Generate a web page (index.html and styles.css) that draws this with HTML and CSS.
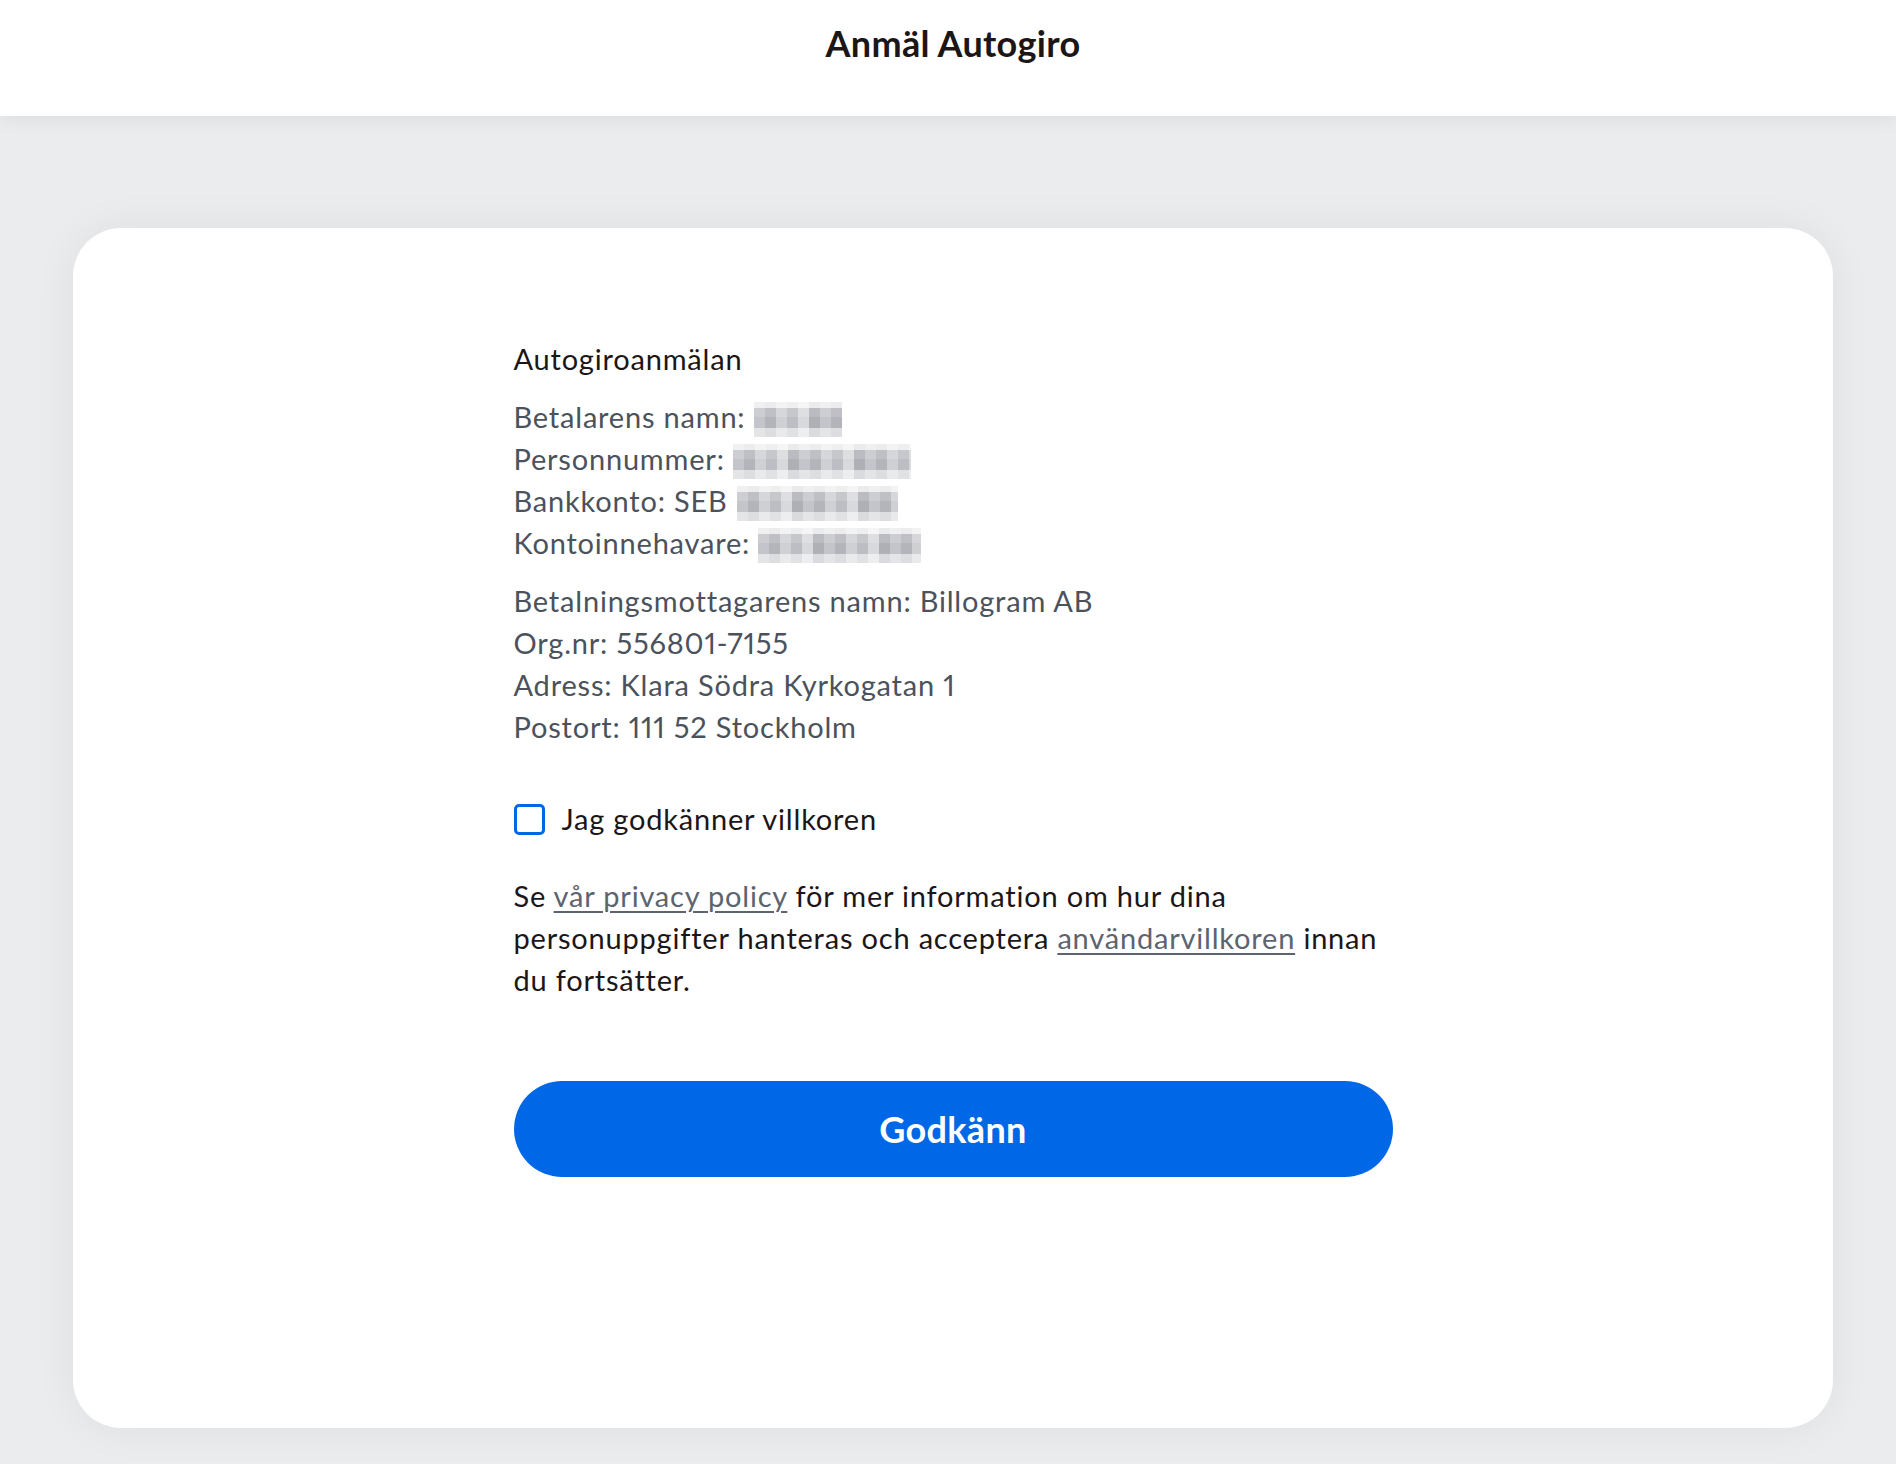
FILE: index.html
```html
<!DOCTYPE html>
<html lang="sv">
<head>
  <meta charset="UTF-8">
  <meta name="viewport" content="width=device-width, initial-scale=1.0">
  <title>Anmäl Autogiro</title>
  <link rel="stylesheet" href="styles.css">
</head>
<body>

<header class="topbar">
  <h1 class="topbar-title">Anmäl Autogiro</h1>
</header>

<main class="page">
  <section class="card">
    <div class="mandate">
      <h2 class="mandate-title">Autogiroanmälan</h2>

      <div class="info-block">
        <p class="info-line">Betalarens namn: <span class="blur blur-name" aria-hidden="true"></span></p>
        <p class="info-line">Personnummer: <span class="blur blur-ssn" aria-hidden="true"></span></p>
        <p class="info-line">Bankkonto: SEB .<span class="blur blur-account" aria-hidden="true"></span></p>
        <p class="info-line">Kontoinnehavare: <span class="blur blur-holder" aria-hidden="true"></span></p>
      </div>

      <div class="info-block">
        <p class="info-line">Betalningsmottagarens namn: Billogram AB</p>
        <p class="info-line">Org.nr: 556801-7155</p>
        <p class="info-line">Adress: Klara Södra Kyrkogatan 1</p>
        <p class="info-line">Postort: 111 52 Stockholm</p>
      </div>

      <label class="consent">
        <input type="checkbox" class="consent-box">
        <span class="consent-text">Jag godkänner villkoren</span>
      </label>

      <p class="terms">
        Se <a href="#" class="terms-link">vår privacy policy</a> för mer information om hur dina
        personuppgifter hanteras och acceptera <a href="#" class="terms-link">användarvillkoren</a> innan
        du fortsätter.
      </p>

      <button type="button" class="approve-btn">Godkänn</button>
    </div>
  </section>
</main>

</body>
</html>
```

FILE: styles.css
```css
body {
  margin: 0;
  background-color: #ebecee;
  font-family: Lato, "Open Sans", sans-serif;
  color: #1c1616;
}

.topbar {
  position: relative;
  z-index: 1;
  height: 116px;
  box-sizing: border-box;
  padding: 23px 0 0 10px;
  background-color: #fff;
  box-shadow: 0 2px 18px rgba(0, 0, 0, 0.07);
  text-align: center;
}

.topbar-title {
  margin: 0;
  font-size: 36px;
  line-height: 40px;
  font-weight: 700;
  letter-spacing: 0.3px;
  color: #1c1616;
}

.page {
  padding: 112px 63px 36px 73px;
}

.card {
  background-color: #fff;
  border-radius: 48px;
  box-shadow: 0 0 44px rgba(0, 0, 0, 0.06);
  padding: 110px 0 251px;
}

.mandate {
  width: 879px;
  margin: 0 auto;
  font-size: 29px;
  line-height: 42px;
  letter-spacing: 0.8px;
  font-variant-numeric: proportional-nums;
}

.mandate-title {
  margin: 0 0 16px;
  font-size: 29px;
  line-height: 42px;
  font-weight: 400;
  color: #1c1616;
}

.info-block {
  margin-bottom: 16px;
  color: #4b525c;
}

.info-block + .info-block {
  margin-bottom: 50px;
}

.info-line {
  margin: 0;
}

.blur {
  display: inline-block;
  height: 35px;
  vertical-align: -9px;
  background:
    linear-gradient(to bottom, rgba(255, 255, 255, 0.75) 0 6px, rgba(255, 255, 255, 0.15) 6px 15px, rgba(255, 255, 255, 0) 15px 26px, rgba(255, 255, 255, 0.55) 26px),
    repeating-linear-gradient(to right, #c3c5ca 0 11px, #b3b5bb 11px 22px, #cfd0d4 22px 33px, #bcbec3 33px 44px, #d8d9dc 44px 55px, #aeb0b6 55px 66px);
}

.blur-name {
  width: 88px;
}

.blur-ssn {
  width: 178px;
}

.blur-account {
  width: 161px;
  margin-left: -6px;
}

.blur-holder {
  width: 163px;
}

.consent {
  display: flex;
  align-items: center;
  gap: 17px;
  cursor: pointer;
}

.consent-box {
  appearance: none;
  -webkit-appearance: none;
  margin: 0;
  width: 31px;
  height: 31px;
  border: 3px solid #0068e5;
  border-radius: 5px;
  background-color: #fff;
  box-sizing: border-box;
}

.consent-text {
  color: #1c1616;
}

.terms {
  margin: 35px 0 0;
  color: #1c1616;
}

.terms-link {
  color: #5c6470;
  text-decoration: underline;
  text-decoration-thickness: 2px;
  text-underline-offset: 4px;
}

.approve-btn {
  display: block;
  width: 100%;
  height: 96px;
  margin-top: 80px;
  border: none;
  border-radius: 48px;
  background-color: #0068e6;
  color: #fff;
  font-family: Lato, "Open Sans", sans-serif;
  font-size: 36px;
  font-weight: 700;
  letter-spacing: 0.3px;
  cursor: pointer;
}
```
